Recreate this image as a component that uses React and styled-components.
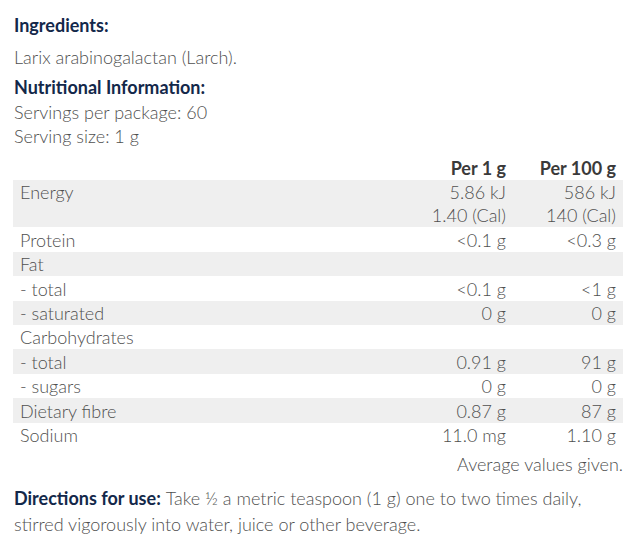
import React from "react";
import styled, { createGlobalStyle } from "styled-components";

const Global = createGlobalStyle`
  html, body { margin: 0; padding: 0; background: #fff; }
  body { font-family: Lato, "Open Sans", sans-serif; }
`;

const Page = styled.div`
  width: 635px;
  box-sizing: border-box;
  padding: 13px 12px 0 13px;
  font-size: 18px;
  font-weight: 300;
  color: #4f4f4f;
  line-height: 24px;
`;

const Heading = styled.div`
  font-weight: 700;
  color: #13284a;
  padding-left: 1px;
  margin-top: ${(p) => p.$top || 0}px;
`;

const Para = styled.div`
  padding-left: 1px;
  margin-top: ${(p) => p.$top || 0}px;
`;

const Table = styled.table`
  width: 610px;
  border-collapse: collapse;
  margin-top: 8px;
`;

const Row = styled.tr`
  background: ${(p) => (p.$shade ? "#efefef" : "transparent")};
`;

const HeadCell = styled.th`
  font-weight: 700;
  color: #3a3a3a;
  text-align: right;
  padding: 1px 7px 0;
  line-height: 23px;
  width: ${(p) => p.$w || "auto"};
`;

const Cell = styled.td`
  text-align: ${(p) => (p.$num ? "right" : "left")};
  padding: 1.4px 7px 0;
  line-height: 23px;
  vertical-align: top;
  white-space: nowrap;
`;

const Note = styled.div`
  text-align: right;
  margin-top: 5px;
`;

const Directions = styled.p`
  margin: 9px 0 0;
  line-height: 26px;
  padding-left: 1px;
`;

const Strong = styled.span`
  font-weight: 700;
  color: #13284a;
  margin-right: 5px;
`;

const rows = [
  ["Protein", "<0.1 g", "<0.3 g"],
  ["Fat", "", ""],
  ["- total", "<0.1 g", "<1 g"],
  ["- saturated", "0 g", "0 g"],
  ["Carbohydrates", "", ""],
  ["- total", "0.91 g", "91 g"],
  ["- sugars", "0 g", "0 g"],
  ["Dietary fibre", "0.87 g", "87 g"],
  ["Sodium", "11.0 mg", "1.10 g"],
];

export default function App() {
  return (
    <>
      <Global />
      <Page>
        <Heading>Ingredients:</Heading>
        <Para $top={8}>Larix arabinogalactan (Larch).</Para>
        <Heading $top={6}>Nutritional Information:</Heading>
        <Para $top={1}>Servings per package: 60</Para>
        <Para>Serving size: 1 g</Para>
        <Table>
          <thead>
            <Row>
              <HeadCell $w="auto"></HeadCell>
              <HeadCell $w="96px">Per 1 g</HeadCell>
              <HeadCell $w="96px">Per 100 g</HeadCell>
            </Row>
          </thead>
          <tbody>
            <Row $shade>
              <Cell>Energy</Cell>
              <Cell $num>
                5.86 kJ
                <br />
                1.40 (Cal)
              </Cell>
              <Cell $num>
                586 kJ
                <br />
                140 (Cal)
              </Cell>
            </Row>
            {rows.map((r, i) => (
              <Row key={i} $shade={i % 2 === 1}>
                <Cell>{r[0]}</Cell>
                <Cell $num>{r[1]}</Cell>
                <Cell $num>{r[2]}</Cell>
              </Row>
            ))}
          </tbody>
        </Table>
        <Note>Average values given.</Note>
        <Directions>
          <Strong>Directions for use:</Strong>
          <span>
            Take ½ a metric teaspoon (1 g) one to two times daily, stirred vigorously into water,
            juice or other beverage.
          </span>
        </Directions>
      </Page>
    </>
  );
}
